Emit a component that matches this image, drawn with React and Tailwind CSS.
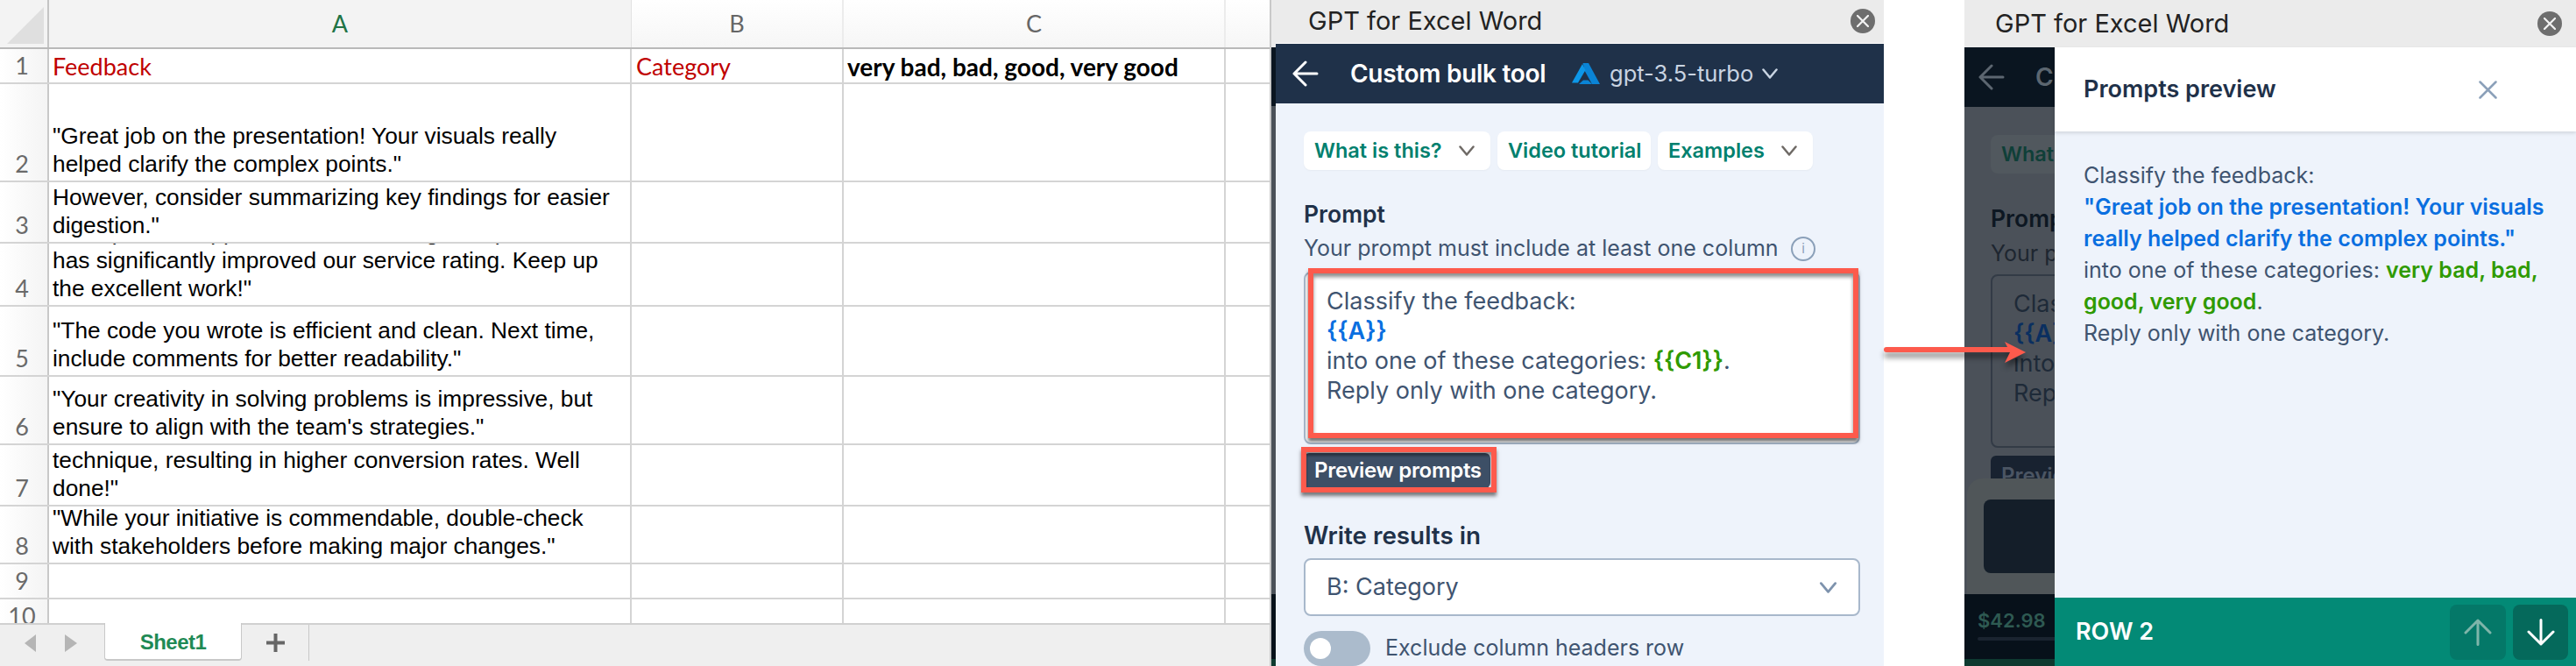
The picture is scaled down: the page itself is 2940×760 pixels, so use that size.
import React from "react";

const Chev = ({ className, sw = 2.5 }) => (
  <svg viewBox="0 0 18 12" fill="none" stroke="currentColor" strokeWidth={sw} strokeLinecap="round" strokeLinejoin="round" className={className}>
    <path d="M1.5 1.5 L9 10.5 L16.5 1.5" />
  </svg>
);

const Back = ({ className }) => (
  <svg viewBox="0 0 30 30" fill="none" stroke="currentColor" strokeWidth="3" strokeLinecap="round" strokeLinejoin="round" className={className}>
    <path d="M28 15 H2 M15 2 L2 15 L15 28" />
  </svg>
);

const Cross = ({ className, sw = 2.5 }) => (
  <svg viewBox="0 0 21 21" fill="none" stroke="currentColor" strokeWidth={sw} strokeLinecap="round" className={className}>
    <path d="M1.5 1.5 L19.5 19.5 M19.5 1.5 L1.5 19.5" />
  </svg>
);

const Close = () => (
  <div className="w-[28px] h-[28px] rounded-full bg-[#6e6e6e] flex items-center justify-center text-[#f2f2f2]">
    <Cross className="w-[14px] h-[14px]" sw={3.4} />
  </div>
);

const Arrow = ({ up, className }) => (
  <svg viewBox="0 0 32 31" fill="none" stroke="currentColor" strokeWidth="3" strokeLinecap="round" strokeLinejoin="round" className={className}>
    {up ? <path d="M16 29.5 V2 M2 16 L16 2 L30 16" /> : <path d="M16 1.5 V29 M2 15 L16 29 L30 15" />}
  </svg>
);

const rows = [
  { n: 1, h: "h-[40px]", lines: [], head: true },
  { n: 2, h: "h-[112px]", lines: ['"Great job on the presentation! Your visuals really', 'helped clarify the complex points."'] },
  { n: 3, h: "h-[70px]", lines: ['However, consider summarizing key findings for easier', 'digestion."'] },
  { n: 4, h: "h-[72px]", lines: ['"Exceptional support for clients during the sprint', 'has significantly improved our service rating. Keep up', 'the excellent work!"'] },
  { n: 5, h: "h-[80px]", lines: ['"The code you wrote is efficient and clean. Next time,', 'include comments for better readability."'] },
  { n: 6, h: "h-[78px]", lines: ['"Your creativity in solving problems is impressive, but', "ensure to align with the team's strategies.\""] },
  { n: 7, h: "h-[70px]", lines: ['technique, resulting in higher conversion rates. Well', 'done!"'] },
  { n: 8, h: "h-[66px]", lines: ['"While your initiative is commendable, double-check', 'with stakeholders before making major changes."'] },
  { n: 9, h: "h-[40px]", lines: [] },
  { n: 10, h: "h-[40px]", lines: [] },
];

const cols = "grid grid-cols-[56px_665px_242px_436px_50px]";

function Excel() {
  return (
    <div className="w-[1449px] h-[760px] shrink-0 flex flex-col overflow-hidden bg-white">
      <div className={`${cols} h-[56px] shrink-0 border-b-2 border-[#b9b9b9] [font-family:Lato,sans-serif] text-[27px]`}>
        <div className="bg-[#f3f3f3] border-r-2 border-[#c4c4c4] h-[54px]">
          <svg width="54" height="54" viewBox="0 0 54 54"><polygon points="50,8 50,50 8,50" fill="#dfdfdf" /></svg>
        </div>
        <div className="bg-[#f3f3f3] border-r border-[#e2e2e2] text-[#217346] flex items-center justify-center">A</div>
        <div className="bg-gradient-to-b from-white to-[#f6f6f6] border-r-2 border-[#ececec] text-[#666] flex items-center justify-center">B</div>
        <div className="bg-gradient-to-b from-white to-[#f6f6f6] border-r-2 border-[#ececec] text-[#666] flex items-center justify-center">C</div>
        <div className="bg-gradient-to-b from-white to-[#f6f6f6]" />
      </div>
      <div className="h-[655px] shrink-0 overflow-hidden">
        {rows.map((r) => (
          <div key={r.n} className={`${cols} ${r.h} border-b-2 border-[#d4d4d4] text-black`}>
            <div className="bg-gradient-to-r from-white to-[#f4f4f4] border-r-2 border-[#c8c8c8] flex items-end justify-center pb-[2px] pr-[4px] [font-family:Lato,sans-serif] text-[27px] leading-[34px] text-[#6a6a6a]">
              {r.n}
            </div>
            <div className={`border-r-2 border-[#d4d4d4] pl-[4px] flex flex-col justify-end overflow-hidden ${r.head ? "pb-[1px]" : "pb-[3px]"}`}>
              {r.head ? (
                <span className="[font-family:Lato,sans-serif] text-[27px] leading-[34px] text-[#c00000]">Feedback</span>
              ) : (
                r.lines.map((l) => (
                  <div key={l} className="[font-family:'Liberation_Sans',sans-serif] text-[26.3px] leading-[32px] whitespace-nowrap shrink-0">{l}</div>
                ))
              )}
            </div>
            <div className="border-r-2 border-[#d4d4d4] pl-[5px] pb-[1px] flex flex-col justify-end">
              {r.head && <span className="[font-family:Lato,sans-serif] text-[27px] leading-[34px] text-[#c00000]">Category</span>}
            </div>
            <div className="border-r-2 border-[#d4d4d4] pl-[4px] pb-[1px] flex flex-col justify-end">
              {r.head && <span className="[font-family:Lato,sans-serif] font-bold text-[28px] leading-[34px] whitespace-nowrap">very bad, bad, good, very good</span>}
            </div>
            <div />
          </div>
        ))}
      </div>
      <div className="h-[49px] shrink-0 bg-[#efefef] border-t-2 border-[#d0d0d0] flex items-start">
        <div className="w-[119px] h-[42px] flex items-center gap-[33px] pl-[28px]">
          <svg width="13" height="20" viewBox="0 0 13 20"><polygon points="13,0 13,20 0,10" fill="#b5b5b5" /></svg>
          <svg width="14" height="20" viewBox="0 0 14 20"><polygon points="0,0 0,20 14,10" fill="#b5b5b5" /></svg>
        </div>
        <div className="w-[157px] h-[43px] -mt-[2px] bg-white rounded-b-[4px] border-x border-b-2 border-[#c8c8c8] flex items-center justify-center pt-[2px] [font-family:'Liberation_Sans',sans-serif] font-bold text-[#1f8a55] text-[24px] tracking-[-0.5px]">
          Sheet1
        </div>
        <div className="w-[77px] h-[41px] border-r border-[#c8c8c8] flex items-center justify-center">
          <svg width="21" height="21" viewBox="0 0 21 21" fill="none" stroke="#666" strokeWidth="4"><path d="M10.5 0 V21 M0 10.5 H21" /></svg>
        </div>
      </div>
    </div>
  );
}

function Sliver() {
  return (
    <div className="w-[7px] shrink-0 flex flex-col border-l-2 border-[#c9c9c9]">
      <div className="h-[54px] bg-[#ebebeb]" />
      <div className="h-[67px] bg-[#0a1520]" />
      <div className="h-[557px] bg-[#4b5159]" />
      <div className="h-[74px] bg-[#07111a]" />
      <div className="h-[8px] bg-[#0e3a30]" />
    </div>
  );
}

const Chip = ({ children, chev, w }) => (
  <div className={`${w} h-[44px] bg-white rounded-[8px] flex items-center justify-between px-[12px] text-[#00806e] font-semibold text-[23.5px] leading-none whitespace-nowrap shadow-[0_1px_2px_rgba(0,0,0,0.04)]`}>
    <span>{children}</span>
    {chev && <Chev className="w-[18px] h-[12px] text-[#6f6a66] mr-[6px]" />}
  </div>
);

function PanelOne() {
  return (
    <div className="w-[701px] h-[760px] shrink-0 flex overflow-hidden [font-family:Inter,sans-serif]">
      <Sliver />
      <div className="w-[694px] flex flex-col">
        <div className="h-[50px] shrink-0 bg-[#ebebeb] flex items-center justify-between pl-[37px] pr-[10px] text-[#222] text-[29px] -mt-[1px]">
          <span>GPT for Excel Word</span>
          <Close />
        </div>
        <div className="h-[68px] shrink-0 bg-[#1f3149] flex items-center pl-[19px] text-white mt-[1px]">
          <Back className="w-[30px] h-[30px]" />
          <span className="ml-[36px] font-semibold text-[28px] tracking-[-0.3px] w-[221px] whitespace-nowrap">Custom bulk tool</span>
          <svg viewBox="0 0 32 24" className="ml-[32px] w-[32px] h-[24px]">
            <path d="M12.5 0 L19 0 L32 24 L23 24 L15 9.5 Z" fill="#0a84d6" />
            <path d="M12 1 L0 22.5 L7 22.5 L15.5 8 Z" fill="#0d97e8" />
            <path d="M8 24 L23 24 L18.5 19.5 L13 19.5 Z" fill="#0a84d6" />
          </svg>
          <span className="ml-[11px] text-[#c9d4e2] text-[25.5px] whitespace-nowrap">gpt-3.5-turbo</span>
          <Chev className="ml-[10px] w-[18px] h-[12px] text-[#c9d4e2]" />
        </div>
        <div className="flex-1 bg-[#eef3fb] pl-[32px] pr-[27px] pt-[32px] overflow-hidden">
          <div className="flex gap-[8px]">
            <Chip chev w="w-[213px]">What is this?</Chip>
            <Chip w="w-[175px]">Video tutorial</Chip>
            <Chip chev w="w-[177px]">Examples</Chip>
          </div>
          <div className="mt-[33px] h-[34px] leading-[34px] font-semibold text-[26.5px] text-[#1f3149]">Prompt</div>
          <div className="mt-[6px] h-[34px] flex items-center text-[#3f5470] text-[25px] whitespace-nowrap">
            <span className="w-[545px]">Your prompt must include at least one column</span>
            <span className="ml-[11px] w-[28px] h-[28px] rounded-full border-2 border-[#8ba0b9] flex items-center justify-center text-[#8ba0b9] text-[15px]">i</span>
          </div>
          <div className="relative mt-[9px] h-[197px] rounded-[8px] bg-white border-2 border-[#a8b8cb] pl-[24px] pt-[15px] text-[27px] leading-[34px] text-[#3f5470]">
            <div>Classify the feedback:</div>
            <div className="font-semibold text-[#0a6fe0]">{"{{A}}"}</div>
            <div>into one of these categories: <span className="font-semibold text-[#2f9a00]">{"{{C1}}"}</span>.</div>
            <div>Reply only with one category.</div>
            <div className="absolute left-[3px] right-0 -top-[6px] bottom-[5px] border-[6px] border-[#fd5a4c] shadow-[0_4px_4px_rgba(0,0,0,0.55),inset_0_4px_4px_rgba(0,0,0,0.45)]" />
          </div>
          <div className="relative mt-[10px] w-[213px] h-[40px] rounded-[6px] bg-[#3d4f66] flex items-center pl-[12px] text-white font-semibold text-[24px] tracking-[-0.3px] whitespace-nowrap">
            Preview prompts
            <div className="absolute -left-[3px] -right-[7px] -top-[7px] -bottom-[5px] border-[6px] border-[#fd5a4c] shadow-[0_4px_4px_rgba(0,0,0,0.5),inset_0_4px_3px_rgba(0,0,0,0.4)]" />
          </div>
          <div className="mt-[37px] h-[34px] leading-[34px] font-semibold text-[27.8px] text-[#1f3149]">Write results in</div>
          <div className="mt-[9px] h-[66px] bg-white rounded-[8px] border-2 border-[#a8b8cb] flex items-center justify-between pl-[24px] pr-[24px] text-[27px] text-[#3f5470]">
            <span>B: Category</span>
            <Chev className="w-[21px] h-[13px] text-[#7e93ad]" sw={2.6} />
          </div>
          <div className="mt-[17px] flex items-center">
            <div className="w-[76px] h-[40px] rounded-full bg-[#abbbcc] flex items-center pl-[7px]">
              <div className="w-[24px] h-[24px] rounded-full bg-white" />
            </div>
            <span className="ml-[17px] text-[25px] text-[#3f5470] whitespace-nowrap">Exclude column headers row</span>
          </div>
        </div>
      </div>
    </div>
  );
}

function DimPage() {
  return (
    <div className="w-[103px] shrink-0 flex flex-col overflow-hidden">
      <div className="h-[68px] shrink-0 bg-[#0a1520] flex items-center pl-[16px] text-[#5c6670] whitespace-nowrap">
        <Back className="w-[30px] h-[30px] shrink-0" />
        <span className="ml-[35px] font-semibold text-[28px]">Custom bulk tool</span>
      </div>
      <div className="relative h-[556px] shrink-0 bg-[#4b5159] pl-[30px] pt-[32px] overflow-hidden whitespace-nowrap">
        <div className="w-[213px] h-[44px] rounded-[8px] bg-[#51585e] flex items-center pl-[12px] text-[#0f3f38] font-semibold text-[23.5px]">What is this?</div>
        <div className="mt-[34px] h-[34px] leading-[34px] font-semibold text-[26.5px] text-[#0d1722]">Prompt</div>
        <div className="mt-[6px] h-[34px] leading-[34px] text-[#1e2630] text-[25px]">Your prompt must include</div>
        <div className="mt-[7px] w-[640px] h-[198px] rounded-[8px] border-2 border-[#333b46] pl-[24px] pt-[15px] text-[27px] leading-[34px] text-[#1e2a38]">
          <div>Classify the feedback:</div>
          <div className="font-semibold text-[#0a2f60]">{"{{A}}"}</div>
          <div>into one of these</div>
          <div>Reply only with one</div>
        </div>
        <div className="mt-[9px] w-[213px] h-[40px] rounded-[6px] bg-[#182230] pl-[12px] pt-[5px] text-[#4b5563] font-semibold text-[24px]">Preview prompts</div>
        <div className="absolute left-[3px] right-0 top-[424px] bottom-0 rounded-tl-[18px] bg-[#505659] pl-[19px] pt-[24px]">
          <div className="w-[300px] h-[84px] rounded-[8px] bg-[#141e29]" />
        </div>
      </div>
      <div className="h-[74px] shrink-0 bg-[#07111a] pl-[15px] pt-[14px]">
        <div className="font-semibold text-[#2e5a52] text-[22px] leading-[32px]">$42.98</div>
        <div className="mt-[3px] w-[200px] h-[4px] rounded-full bg-[#1a2430]" />
      </div>
      <div className="h-[8px] shrink-0 bg-[#0e3a30]" />
    </div>
  );
}

function Drawer() {
  return (
    <div className="w-[595px] h-[706px] shrink-0 flex flex-col">
      <div className="h-[96px] shrink-0 bg-white flex items-center justify-between pl-[33px] pr-[90px] shadow-[0_2px_4px_rgba(0,0,0,0.12)] z-10">
        <span className="font-semibold text-[27px] text-[#1f3149]">Prompts preview</span>
        <Cross className="w-[21px] h-[21px] text-[#8ba0b9]" />
      </div>
      <div className="flex-1 bg-[#eef3fb] pl-[33px] pr-[24px] pt-[32px] text-[25px] leading-[36px] text-[#3f5470]">
        <div>Classify the feedback:</div>
        <div className="font-semibold text-[#0a6fe0]">"Great job on the presentation! Your visuals really helped clarify the complex points."</div>
        <div>into one of these categories: <span className="font-semibold text-[#2f9a00]">very bad, bad, good, very good</span>.</div>
        <div>Reply only with one category.</div>
      </div>
      <div className="h-[78px] shrink-0 bg-[#038a76] flex items-center justify-between pl-[24px] pr-[9px]">
        <span className="text-white font-semibold text-[27px]">ROW 2</span>
        <div className="flex gap-[8px] pt-[1px]">
          <div className="w-[64px] h-[63px] rounded-[8px] bg-[#047868] flex items-center justify-center text-[#7fb5aa]"><Arrow up className="w-[32px] h-[31px]" /></div>
          <div className="w-[63px] h-[63px] rounded-[8px] bg-[#05695b] flex items-center justify-center text-white"><Arrow className="w-[32px] h-[31px]" /></div>
        </div>
      </div>
    </div>
  );
}

function PanelTwo() {
  return (
    <div className="w-[698px] h-[760px] shrink-0 flex flex-col overflow-hidden [font-family:Inter,sans-serif]">
      <div className="h-[54px] shrink-0 bg-[#ebebeb] flex items-center justify-between pl-[35px] pr-[16px] text-[#222] text-[29px]">
        <span>GPT for Excel Word</span>
        <Close />
      </div>
      <div className="flex">
        <DimPage />
        <Drawer />
      </div>
    </div>
  );
}

export default function App() {
  return (
    <div className="relative w-[2940px] h-[760px] flex overflow-hidden bg-white">
      <Excel />
      <PanelOne />
      <div className="w-[92px] shrink-0" />
      <PanelTwo />
      <svg width="170" height="40" viewBox="0 0 170 40" className="absolute left-[2150px] top-[385px] drop-shadow-[0_6px_3px_rgba(0,0,0,0.45)]">
        <path d="M3 14 H146" stroke="#fd5a4c" strokeWidth="6" strokeLinecap="round" fill="none" />
        <polygon points="162,17 138,5 144,17 138,29" fill="#fd5a4c" />
      </svg>
    </div>
  );
}
